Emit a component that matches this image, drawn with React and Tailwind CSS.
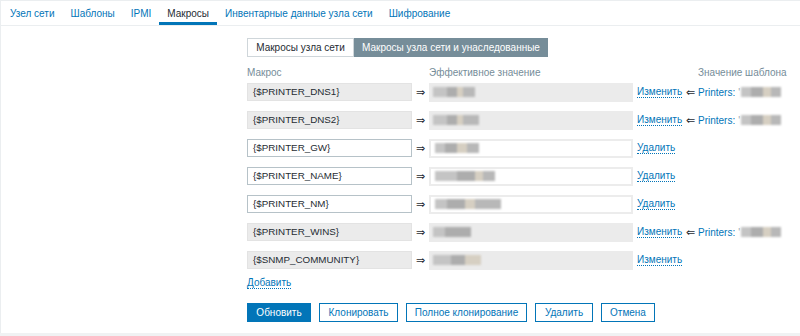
const tabs = ["Узел сети", "Шаблоны", "IPMI", "Макросы", "Инвентарные данные узла сети", "Шифрование"];

const macros = [
  { name: "{$PRINTER_DNS1}", inherited: true, blur: [14, 10, 6, 12], tpl: true },
  { name: "{$PRINTER_DNS2}", inherited: true, blur: [14, 10, 6, 16], tpl: true },
  { name: "{$PRINTER_GW}", inherited: false, blur: [10, 12, 10, 12] },
  { name: "{$PRINTER_NAME}", inherited: false, blur: [22, 18, 8, 12] },
  { name: "{$PRINTER_NM}", inherited: false, blur: [12, 18, 10, 26] },
  { name: "{$PRINTER_WINS}", inherited: true, blur: [12, 26], tpl: true },
  { name: "{$SNMP_COMMUNITY}", inherited: true, blur: [18, 14, 16] },
];

const shades = ["bg-[#c4c4c4]", "bg-[#adadad]", "bg-[#d6cfc2]", "bg-[#b8b8b8]", "bg-[#cacaca]"];

function Blur({ parts }) {
  return (
    <div className="flex h-[10px] blur-[1px]">
      {parts.map((w, i) => (
        <div key={i} className={shades[i % shades.length]} style={{ width: w }} />
      ))}
    </div>
  );
}

function Link({ children }) {
  return (
    <span className="border-b border-dotted border-[#0275b8] leading-[11px] text-[#0275b8]">{children}</span>
  );
}

export default function App() {
  return (
    <div className="h-[336px] w-[800px] overflow-hidden bg-[#f0f2f3] font-['Liberation_Sans',Arial,sans-serif] text-[10px] text-[#1f2c33]">
      <div className="h-[333px] border-l border-t border-[#ebeef0] bg-white">
        <div className="flex h-[25px] border-b border-[#ebeef0] pl-[1px]">
          {tabs.map((t) => (
            <div
              key={t}
              className={
                "flex items-center px-[8px] pt-[1px] " +
                (t === "Макросы"
                  ? "border-b-[3px] border-[#0275b8] pt-[4px] text-[#1f2c33]"
                  : "text-[#0275b8]")
              }
            >
              {t}
            </div>
          ))}
        </div>

        <div className="pl-[246px] pt-[12px]">
          <div className="flex h-[19px] w-[301px]">
            <div className="flex w-[107px] items-center justify-center border border-[#cfd6da] bg-white">
              Макросы узла сети
            </div>
            <div className="flex flex-1 items-center justify-center bg-[#768d99] text-white">
              Макросы узла сети и унаследованные
            </div>
          </div>

          <div className="mt-[9px] flex h-[12px] items-center text-[#768d99]">
            <div className="w-[182px]">Макрос</div>
            <div className="w-[269px]">Эффективное значение</div>
            <div>Значение шаблона</div>
          </div>

          {macros.map((m) => (
            <div key={m.name} className="flex h-[28px] items-center">
              <div
                className={
                  "flex h-[18px] w-[165px] items-center px-[5px] text-[9.8px] " +
                  (m.inherited ? "bg-[#ebebeb] border border-[#e3e3e3]" : "border border-[#b6c2c8] bg-white")
                }
              >
                {m.name}
              </div>
              <div className="w-[17px] text-center text-[11px] leading-none">⇒</div>
              <div
                className={
                  "flex h-[19px] w-[204px] items-center px-[4px] " +
                  (m.inherited ? "bg-[#ebebeb]" : "border-2 border-[#ececec] bg-white")
                }
              >
                <Blur parts={m.blur} />
              </div>
              <div className="flex w-[65px] items-center pl-[4px]">
                <Link>{m.inherited ? "Изменить" : "Удалить"}</Link>
                {m.tpl && <span className="ml-[4px] text-[11px] leading-none text-[#1f2c33]">⇐</span>}
              </div>
              {m.tpl && (
                <div className="flex items-center text-[#0275b8]">
                  Printers:
                  <span className="ml-[3px] mr-[1px] text-[#9aa5ab]">'</span>
                  <Blur parts={[10, 12, 8, 10]} />
                </div>
              )}
            </div>
          ))}

          <div className="mt-[2px] flex h-[14px] items-center">
            <Link>Добавить</Link>
          </div>

          <div className="mt-[13px] flex h-[19px] gap-[8px]">
            <button className="w-[64px] bg-[#0275b8] text-white">Обновить</button>
            <button className="w-[79px] border border-[#0275b8] bg-white text-[#0275b8]">Клонировать</button>
            <button className="w-[121px] border border-[#0275b8] bg-white text-[#0275b8]">Полное клонирование</button>
            <button className="w-[58px] border border-[#0275b8] bg-white text-[#0275b8]">Удалить</button>
            <button className="w-[54px] border border-[#0275b8] bg-white text-[#0275b8]">Отмена</button>
          </div>
        </div>
      </div>
    </div>
  );
}
